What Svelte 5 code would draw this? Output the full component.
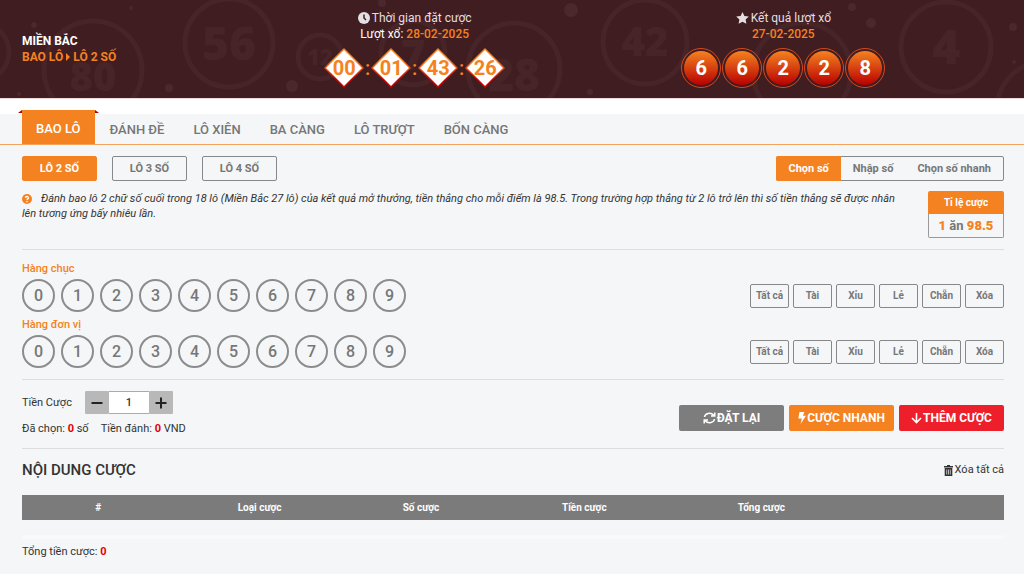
<script lang="ts">
	type Ball = { x: number; y: number; r: number; n: string; base: number; size: number };

	const tabs = ['BAO LÔ', 'ĐÁNH ĐỀ', 'LÔ XIÊN', 'BA CÀNG', 'LÔ TRƯỢT', 'BỐN CÀNG'];
	const types = ['LÔ 2 SỐ', 'LÔ 3 SỐ', 'LÔ 4 SỐ'];
	const modes = ['Chọn số', 'Nhập số', 'Chọn số nhanh'];
	const rows = ['Hàng chục', 'Hàng đơn vị'];
	const filters = ['Tất cả', 'Tài', 'Xỉu', 'Lẻ', 'Chẵn', 'Xóa'];
	const digits = [0, 1, 2, 3, 4, 5, 6, 7, 8, 9];
	const columns = ['#', 'Loại cược', 'Số cược', 'Tiền cược', 'Tổng cược', ''];
	const countdown = ['00', '01', '43', '26'];
	const results = [6, 6, 2, 2, 8];

	const balls: Ball[] = [
		{ x: 93, y: 70, r: 49, n: '80', base: 91, size: 40 },
		{ x: 229, y: 43, r: 44, n: '56', base: 60, size: 46 },
		{ x: 320, y: 57, r: 22, n: '12', base: 65, size: 22 },
		{ x: 413, y: 53, r: 32, n: '7', base: 70, size: 42 },
		{ x: 514, y: 69, r: 46, n: '28', base: 91, size: 44 },
		{ x: 645, y: 42, r: 42, n: '42', base: 56, size: 40 },
		{ x: 802, y: 72, r: 49, n: '', base: 0, size: 0 },
		{ x: 946, y: 47, r: 45, n: '4', base: 64, size: 48 },
		{ x: -20, y: 52, r: 29, n: '', base: 0, size: 0 },
		{ x: 1046, y: 110, r: 49, n: '', base: 0, size: 0 }
	];
	const dots = [
		[34, 25, 3], [131, 8, 2], [19, 94, 2], [169, 88, 4], [292, 86, 6], [382, 3, 4],
		[571, 10, 7], [590, 92, 3], [852, 7, 4], [871, 23, 5], [1013, 27, 4], [1014, 62, 2]
	];

	let activeTab = $state(0);
	let activeType = $state(0);
	let activeMode = $state(0);
	let stake = $state(1);
	let picked: number[][] = $state([[], []]);

	let count = $derived(picked[0].length * picked[1].length);

	function toggle(row: number, n: number) {
		picked[row] = picked[row].includes(n)
			? picked[row].filter((d) => d !== n)
			: [...picked[row], n];
	}

	function applyFilter(row: number, i: number) {
		const tests = [
			() => true,
			(d: number) => d >= 5,
			(d: number) => d < 5,
			(d: number) => d % 2 === 1,
			(d: number) => d % 2 === 0,
			() => false
		];
		picked[row] = digits.filter(tests[i]);
	}
</script>

<header>
	<svg class="decor" aria-hidden="true">
		{#each balls as b}
			<circle cx={b.x} cy={b.y} r={b.r} fill="none" stroke="#472428" stroke-width="5" />
			{#if b.n}
				<text x={b.x} y={b.base} font-size={b.size} text-anchor="middle">{b.n}</text>
			{/if}
		{/each}
		{#each dots as [x, y, r]}
			<circle cx={x} cy={y} r={r} fill="#4b282c" />
		{/each}
	</svg>
	<div class="region">
		<div>MIỀN BẮC</div>
		<div class="crumb">
			BAO LÔ<svg width="4" height="8" viewBox="0 0 4 8"><path d="M0 0l4 4-4 4z" /></svg>LÔ 2 SỐ
		</div>
	</div>
	<div class="info">
		<div class="caption">
			<svg width="12" height="12" viewBox="0 0 12 12">
				<circle cx="6" cy="6" r="6" />
				<path d="M6 2.5V6l2 2" fill="none" stroke="#401d21" stroke-width="1.5" />
			</svg>Thời gian đặt cược
		</div>
		<div class="draw">Lượt xổ: <b>28-02-2025</b></div>
		<div class="clock">
			{#each countdown as part, i}
				{#if i > 0}<span class="colon">:</span>{/if}
				<span class="diamond">
					<svg width="40" height="40" viewBox="0 0 40 40" aria-hidden="true">
						<defs>
							<linearGradient id="edge{i}" x1="0" y1="0" x2="0" y2="1">
								<stop offset="0.3" stop-color="#f58220" />
								<stop offset="0.8" stop-color="#c00" />
							</linearGradient>
						</defs>
						<path d="M20 1L39 20 20 39 1 20z" fill="#fff" stroke="url(#edge{i})" stroke-width="1.5" stroke-linejoin="round" />
					</svg>
					<b>{part}</b>
				</span>
			{/each}
		</div>
	</div>
	<div class="info">
		<div class="caption">
			<svg width="13" height="12" viewBox="0 0 13 12">
				<path d="M6.5 0l1.900 3.900 4.400.6-3.200 3 .8 4.300-3.900-2-3.900 2 .8-4.300-3.200-3 4.400-.6z" />
			</svg>Kết quả lượt xổ
		</div>
		<div class="draw"><b>27-02-2025</b></div>
		<div class="results">
			{#each results as n}
				<span class="ball"><b>{n}</b></span>
			{/each}
		</div>
	</div>
</header>

<nav>
	{#each tabs as tab, i}
		<button class="tab" class:active={activeTab === i} onclick={() => (activeTab = i)}>{tab}</button>
	{/each}
</nav>

<main>
	<div class="bar">
		<div class="types">
			{#each types as type, i}
				<button class="type" class:active={activeType === i} onclick={() => (activeType = i)}>{type}</button>
			{/each}
		</div>
		<div class="modes">
			{#each modes as mode, i}
				<button class:active={activeMode === i} onclick={() => (activeMode = i)}>{mode}</button>
			{/each}
		</div>
	</div>

	<section class="guide">
		<p>
			<svg width="10" height="10" viewBox="0 0 10 10" aria-hidden="true">
				<circle cx="5" cy="5" r="5" fill="#f58220" />
				<path d="M3.400 3.900C3.500 2 6.600 2.100 6.500 3.900 6.400 4.900 5 4.900 5 6" fill="none" stroke="#fff" stroke-width="1.300" />
				<circle cx="5" cy="7.600" r="0.800" fill="#fff" />
			</svg>Đánh bao lô 2 chữ số cuối trong 18 lô (Miền Bắc 27 lô) của kết quả mở thưởng, tiền thắng cho mỗi
			điểm là 98.5. Trong trường hợp thắng từ 2 lô trở lên thì số tiền thắng sẽ được nhân lên tương ứng bấy
			nhiêu lần.
		</p>
		<div class="rate">
			<div class="rate-head">Tỉ lệ cược</div>
			<div class="rate-body"><b>1</b> ăn <b>98.5</b></div>
		</div>
	</section>

	<section class="numbers">
		{#each rows as row, r}
			<h3>{row}</h3>
			<div class="number-row">
				<div class="digits">
					{#each digits as n}
						<button class:active={picked[r].includes(n)} onclick={() => toggle(r, n)}>{n}</button>
					{/each}
				</div>
				<div class="filters">
					{#each filters as filter, i}
						<button onclick={() => applyFilter(r, i)}>{filter}</button>
					{/each}
				</div>
			</div>
		{/each}
	</section>

	<section class="betting">
		<div>
			<div class="stake">
				<label for="stake">Tiền Cược</label>
				<div class="stepper">
					<button aria-label="Giảm" onclick={() => (stake = Math.max(1, stake - 1))}>
						<svg width="12" height="12" viewBox="0 0 12 12"><path d="M.5 5h11v2H.5z" /></svg>
					</button>
					<input id="stake" type="text" bind:value={stake} />
					<button aria-label="Tăng" onclick={() => (stake = Number(stake) + 1)}>
						<svg width="12" height="12" viewBox="0 0 12 12"><path d="M.5 5H5V.5h2V5h4.500v2H7v4.500H5V7H.5z" /></svg>
					</button>
				</div>
			</div>
			<div class="summary">
				<span>Đã chọn: <b>{count}</b> số</span>
				<span>Tiền đánh: <b>{count * stake}</b> VND</span>
			</div>
		</div>
		<div class="actions">
			<button class="reset" onclick={() => (picked = [[], []])}>
				<svg width="13" height="12" viewBox="0 0 13 12">
					<path d="M1.500 5C2 1.500 7.500-.5 10.800 3.300M11.500 7C11 10.500 5.500 12.500 2.200 8.700M11.800.5v3.600H8M1.200 11.500V7.900H5" fill="none" stroke="#fff" stroke-width="1.500" />
				</svg>ĐẶT LẠI
			</button>
			<button class="quick">
				<svg width="8" height="12" viewBox="0 0 8 12"><path d="M1.500 0h4.800L5 3.800h3L2.600 12l1.200-5.400H.3z" fill="#fff" /></svg>CƯỢC NHANH
			</button>
			<button class="add">
				<svg width="11" height="12" viewBox="0 0 11 12">
					<path d="M5.500 1v9M1 6l4.500 4.500L10 6" fill="none" stroke="#fff" stroke-width="1.600" />
				</svg>THÊM CƯỢC
			</button>
		</div>
	</section>

	<section class="content">
		<div class="content-head">
			<h2>NỘI DUNG CƯỢC</h2>
			<button class="clear">
				<svg width="9" height="11" viewBox="0 0 9 11">
					<path d="M3 0h3v1h3v1.500H0V1h3zM.7 3h7.600v8H.7z" fill="#333" />
					<path d="M2.700 4.500v5M4.500 4.500v5M6.300 4.500v5" stroke="#f4f5f7" stroke-width="0.700" />
				</svg>Xóa tất cả
			</button>
		</div>
		<table>
			<thead>
				<tr>
					{#each columns as column}
						<th>{column}</th>
					{/each}
				</tr>
			</thead>
		</table>
		<div class="total">Tổng tiền cược: <b>0</b></div>
	</section>
</main>

<style>
	:global(body) {
		background: #f4f6f8;
		color: #333;
		font: 11px/16px Roboto, 'Noto Sans', sans-serif;
	}

	button,
	input {
		font: inherit;
		color: inherit;
		margin: 0;
		padding: 0;
		border: 0;
		box-sizing: border-box;
		background: none;
	}

	button {
		cursor: pointer;
		white-space: nowrap;
	}

	header {
		position: relative;
		display: grid;
		grid-template-columns: 22.5% 36% 36%;
		height: 98px;
		overflow: hidden;
		background: #401d21;
		border-bottom: 1px solid #ecdadd;
		color: #fff;
		font-size: 12px;
	}

	.decor {
		position: absolute;
		inset: 0;
		width: 100%;
		height: 100%;
	}

	.decor text {
		fill: #472428;
		font-family: 'Open Sans', sans-serif;
		font-weight: 800;
	}

	.region,
	.info {
		position: relative;
	}

	.region {
		padding: 33px 0 0 22px;
		font-weight: 700;
	}

	.crumb {
		color: #f58220;
	}

	.crumb svg {
		margin: 0 3px;
		fill: #f58220;
	}

	.info {
		display: flex;
		flex-direction: column;
		align-items: center;
		padding-top: 10px;
	}

	.caption {
		display: flex;
		align-items: center;
		gap: 2px;
		color: #e4dfe0;
	}

	.caption svg {
		fill: #e4dfe0;
	}

	.draw b {
		color: #f58220;
		font-weight: 500;
	}

	.clock,
	.results {
		display: flex;
		align-items: center;
		margin-top: 6px;
	}

	.diamond {
		position: relative;
		display: grid;
		place-items: center;
		width: 40px;
		height: 40px;
		color: #f58220;
		font-size: 20px;
	}

	.diamond svg {
		position: absolute;
		inset: 0;
	}

	.diamond b {
		position: relative;
	}

	.colon {
		width: 7px;
		text-align: center;
		color: #f58220;
		font-size: 20px;
		font-weight: 500;
	}

	.ball {
		box-sizing: border-box;
		width: 40px;
		height: 40px;
		padding: 2px;
		border: 1px solid #d8481a;
		border-radius: 50%;
	}

	.ball + .ball {
		margin-left: 1px;
	}

	.ball b {
		display: grid;
		place-items: center;
		height: 34px;
		border-radius: 50%;
		background: linear-gradient(#f58220, #b80000);
		font-size: 20px;
	}

	nav {
		display: flex;
		align-items: flex-end;
		gap: 1px;
		height: 45px;
		padding: 0 22px;
		border-bottom: 1px solid #f3a35c;
		background: linear-gradient(#fff 15px, #f4f6f8 15px);
	}

	.tab {
		height: 31px;
		padding: 2px 14px 0;
		color: #777;
		font-size: 13px;
		font-weight: 500;
	}

	.tab.active {
		position: relative;
		height: 34px;
		padding-top: 4px;
		background: #f58220;
		color: #fff;
	}

	.tab.active::before,
	.tab.active::after {
		content: '';
		position: absolute;
		top: 0;
		border-bottom: 3px solid #b00000;
	}

	.tab.active::before {
		right: 100%;
		border-left: 4px solid transparent;
	}

	.tab.active::after {
		left: 100%;
		border-right: 4px solid transparent;
	}

	main {
		padding: 11px 20px 12px 22px;
	}

	.types,
	.filters,
	.digits,
	.actions {
		display: flex;
	}

	.bar,
	.number-row,
	.guide,
	.betting,
	.content-head {
		display: flex;
		justify-content: space-between;
	}

	.types {
		gap: 15px;
	}

	.type {
		width: 75px;
		height: 25px;
		border: 1px solid #888;
		border-radius: 2px;
		color: #777;
		font-weight: 700;
	}

	.type.active {
		border-color: #f58220;
		background: #f58220;
		color: #fff;
	}

	.modes {
		display: flex;
		box-sizing: border-box;
		height: 25px;
		border: 1px solid #888;
		border-radius: 2px;
	}

	.modes button {
		padding: 0 12px;
		color: #777;
		font-weight: 700;
	}

	.modes .active {
		margin: -1px 0 -1px -1px;
		border-radius: 2px 0 0 2px;
		background: #f58220;
		color: #fff;
	}

	section {
		border-bottom: 1px solid #ddd;
	}

	.guide {
		gap: 20px;
		padding: 10px 0 11px;
	}

	.guide p {
		margin: 0;
		font-style: italic;
		line-height: 15px;
	}

	.guide svg {
		margin-right: 9px;
		vertical-align: -2px;
	}

	.rate {
		flex: none;
		width: 76px;
		text-align: center;
		font-weight: 700;
	}

	.rate-head {
		border-radius: 2px 2px 0 0;
		background: #f58220;
		color: #fff;
		font-size: 10px;
		line-height: 23px;
	}

	.rate-body {
		border: 1px solid #999;
		border-top: 0;
		border-radius: 0 0 2px 2px;
		color: #777;
		font-size: 13px;
		line-height: 23px;
	}

	.rate b {
		color: #f58220;
	}

	.numbers {
		padding: 11px 0;
	}

	h3 {
		margin: 0 0 2px;
		color: #f58220;
		font-size: 11px;
		font-weight: 500;
	}

	.number-row + h3 {
		margin-top: 5px;
	}

	.number-row {
		align-items: center;
	}

	.digits {
		gap: 6px;
	}

	.digits button {
		width: 33px;
		height: 33px;
		border: 2px solid #8c8c8c;
		border-radius: 50%;
		color: #777;
		font-size: 16px;
		font-weight: 500;
	}

	.digits .active {
		border-color: #f58220;
		background: #f58220;
		color: #fff;
	}

	.filters {
		gap: 4px;
	}

	.filters button {
		width: 39px;
		height: 24px;
		border: 1px solid #888;
		border-radius: 2px;
		color: #777;
		font-size: 10px;
		font-weight: 700;
	}

	.betting {
		align-items: flex-end;
		padding: 11px 0;
	}

	.stake {
		display: flex;
		align-items: center;
		gap: 13px;
	}

	.stepper {
		display: flex;
	}

	.stepper button {
		display: grid;
		place-items: center;
		width: 24px;
		height: 23px;
		border-radius: 1px;
		background: #b8b8b8;
	}

	.stepper svg {
		fill: #222;
	}

	.stepper input {
		width: 40px;
		height: 23px;
		border: 1px solid #aaa;
		border-width: 1px 0;
		background: #fff;
		text-align: center;
		font-weight: 500;
	}

	.summary {
		display: flex;
		gap: 12px;
		margin-top: 7px;
	}

	.summary b,
	.total b {
		color: #e60000;
	}

	.actions {
		gap: 5px;
		padding-bottom: 6px;
	}

	.actions button {
		display: flex;
		align-items: center;
		justify-content: center;
		gap: 1px;
		width: 105px;
		height: 26px;
		border-radius: 2px;
		color: #fff;
		font-size: 12px;
		font-weight: 700;
	}

	.actions .reset {
		background: #7d7d7d;
	}

	.actions .quick {
		background: #f58220;
	}

	.actions .add {
		background: #ec1f2b;
	}

	.content {
		padding-top: 13px;
		border: 0;
	}

	h2 {
		margin: 0;
		font-size: 15px;
		font-weight: 500;
	}

	.clear {
		display: flex;
		align-items: center;
		gap: 2px;
	}

	table {
		width: 100%;
		margin-top: 17px;
		border-collapse: collapse;
		table-layout: fixed;
		background: #7b7b7b;
		color: #fff;
		font-size: 10px;
	}

	th {
		height: 25px;
		padding: 0;
		width: 15.5%;
	}

	th:nth-child(2) {
		width: 17.3%;
	}

	th:nth-child(4) {
		width: 17.7%;
	}

	th:nth-child(5) {
		width: 18.3%;
	}

	.total {
		margin-top: 15px;
		padding-top: 5px;
		border-top: 4px solid #f9f9f9;
	}
</style>
